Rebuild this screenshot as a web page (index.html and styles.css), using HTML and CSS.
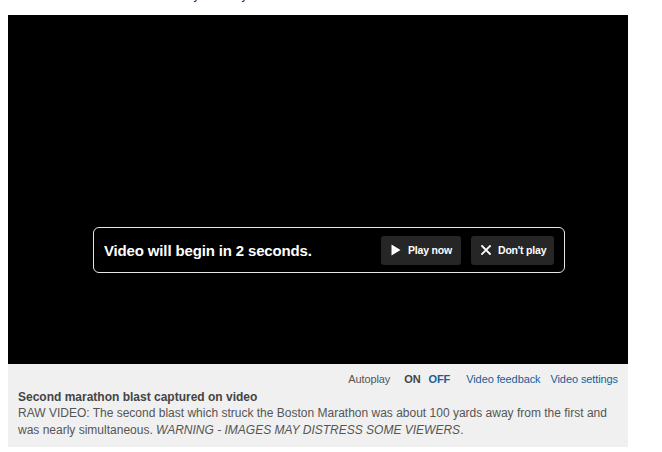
FILE: index.html
```html
<!DOCTYPE html>
<html>
<head>
<meta charset="utf-8">
<link rel="stylesheet" href="styles.css">
</head>
<body>
<p class="note">Australians concerned for the safety of family or friends should contact DFAT on 1300 555 135.</p>
<div class="player">
  <div class="screen">
    <div class="prompt">
      <span class="prompt-text">Video will begin in 2 seconds.</span>
      <div class="prompt-actions">
        <button class="btn btn-play"><svg class="ico" width="10" height="12" viewBox="0 0 10 12"><path d="M0.5 0.5 L9.5 6 L0.5 11.5 Z" fill="#fff"/></svg>Play now</button>
        <button class="btn btn-skip"><svg class="ico" width="10" height="10" viewBox="0 0 10 10"><path d="M1 1 L9 9 M9 1 L1 9" stroke="#fff" stroke-width="1.8" stroke-linecap="square"/></svg>Don't play</button>
      </div>
    </div>
  </div>
  <div class="info">
    <div class="controls">
      <span class="label">Autoplay</span>
      <span class="toggle">
        <span class="on">ON</span>
        <span class="off">OFF</span>
      </span>
      <a class="link">Video feedback</a>
      <a class="link">Video settings</a>
    </div>
    <div class="title">Second marathon blast captured on video</div>
    <div class="desc">RAW VIDEO: The second blast which struck the Boston Marathon was about 100 yards away from the first and was nearly simultaneous. <em>WARNING - IMAGES MAY DISTRESS SOME VIEWERS</em>.</div>
  </div>
</div>
</body>
</html>
```
FILE: styles.css
```css
html, body {
  margin: 0;
  padding: 0;
  background: #fff;
  font-family: "Liberation Sans", Arial, sans-serif;
}
.note {
  margin: -12px 0 0 8px;
  font-size: 12px;
  line-height: 15px;
  color: #222;
  white-space: nowrap;
}
.player {
  width: 620px;
  margin: 12px 0 0 8px;
}
.screen {
  position: relative;
  height: 349px;
  background: #000;
}
.prompt {
  position: absolute;
  left: 85px;
  top: 212px;
  width: 470px;
  height: 44px;
  border: 1px solid #e6e6e6;
  border-radius: 6px;
  display: flex;
  align-items: center;
  justify-content: space-between;
}
.prompt-text {
  margin-left: 10px;
  color: #fff;
  font-weight: bold;
  font-size: 15px;
  letter-spacing: -0.15px;
  white-space: nowrap;
}
.prompt-actions {
  display: flex;
  gap: 10px;
  margin-right: 10px;
}
.btn {
  display: flex;
  align-items: center;
  box-sizing: border-box;
  height: 29px;
  padding: 0 0 0 10px;
  background: #262626;
  border: none;
  border-radius: 3px;
  color: #fff;
  font-family: "Liberation Sans", Arial, sans-serif;
  font-weight: bold;
  font-size: 10.5px;
  letter-spacing: -0.2px;
  white-space: nowrap;
  gap: 7px;
}
.btn-play { width: 80px; }
.btn-skip { width: 83px; }
.info {
  background: #f0f0f0;
  height: 83px;
  padding: 8px 10px 0 10px;
  box-sizing: border-box;
}
.controls {
  display: flex;
  justify-content: flex-end;
  align-items: center;
  font-size: 11px;
  line-height: 14px;
  letter-spacing: -0.1px;
}
.label {
  color: #555;
  margin-right: 14px;
}
.toggle {
  display: flex;
  gap: 8px;
  font-weight: bold;
  margin-right: 16px;
}
.on { color: #444; }
.off { color: #1a5d96; }
.link {
  color: #1a5d96;
  margin-left: 10px;
}
.link:first-of-type { margin-left: 0; }
.title {
  margin-top: 3px;
  font-size: 12px;
  line-height: 16px;
  font-weight: bold;
  color: #444;
}
.desc {
  font-size: 12px;
  line-height: 17px;
  color: #555;
}
```
